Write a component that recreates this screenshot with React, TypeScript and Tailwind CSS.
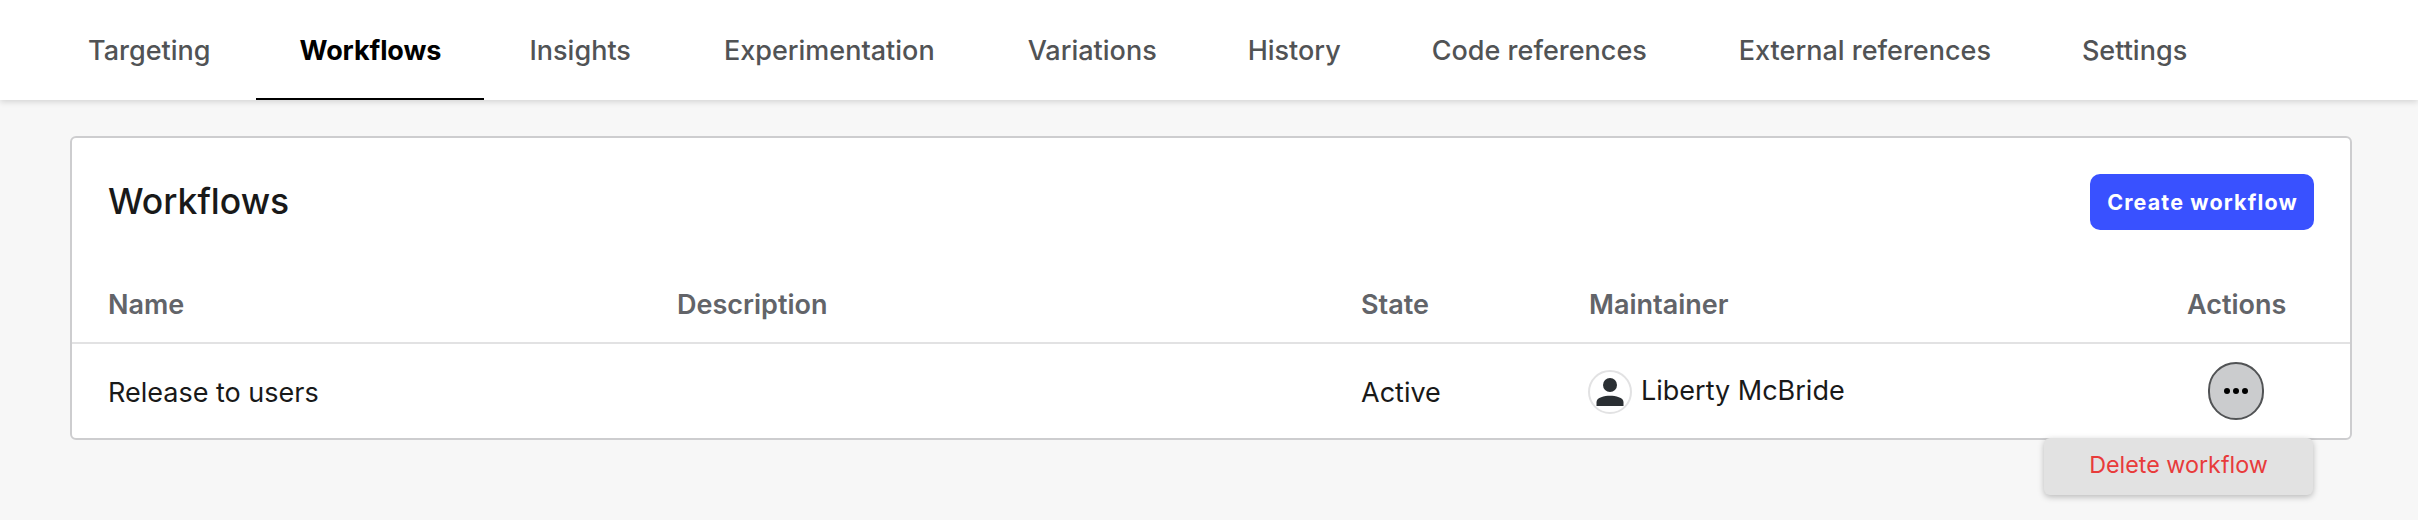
const tabs = [
  { label: 'Targeting', spacing: 'ml-0' },
  { label: 'Workflows', spacing: 'ml-0.5', active: true },
  { label: 'Insights', spacing: 'ml-px' },
  { label: 'Experimentation', spacing: 'ml-[5px]' },
  { label: 'Variations', spacing: 'ml-[5px]' },
  { label: 'History', spacing: 'ml-[3px]' },
  { label: 'Code references', spacing: 'ml-[3px]' },
  { label: 'External references', spacing: 'ml-1' },
  { label: 'Settings', spacing: 'ml-[3px]' },
];

const columns = 'grid grid-cols-[569px_684px_227px_599px_1fr] pl-9';

export default function App() {
  return (
    <div className="h-[520px] w-[2418px] overflow-hidden bg-[#f7f7f7] font-['Inter',sans-serif] text-[27px] text-[#191919]">
      <nav className="relative flex h-[100px] bg-white pl-11 text-[#515355] shadow-[0_2px_6px_rgba(0,0,0,0.14)]">
        {tabs.map(({ label, spacing, active }) => (
          <a
            key={label}
            className={`${spacing} flex items-center border-b-2 pt-[5px] ${
              active
                ? 'w-[228px] justify-center border-black font-bold tracking-[-0.1px] text-black'
                : 'border-transparent px-11 font-medium'
            }`}
          >
            {label}
          </a>
        ))}
      </nav>

      <main className="pt-9 pr-[66px] pl-[70px]">
        <section className="h-[304px] rounded-md border-2 border-[#cdcdcf] bg-white">
          <header className="flex h-[130px] items-center justify-between pr-9 pb-0.5 pl-9">
            <h1 className="text-[35.5px] font-medium">Workflows</h1>
            <button className="h-14 w-56 rounded-[10px] bg-[#3951ff] pl-px text-[21.5px] font-bold tracking-[1.15px] text-white">
              Create workflow
            </button>
          </header>

          <div className={`${columns} h-[76px] items-center border-b-2 border-[#e2e2e3] font-semibold text-[#626469]`}>
            <span>Name</span>
            <span>Description</span>
            <span>State</span>
            <span className="pl-px">Maintainer</span>
            <span>Actions</span>
          </div>

          <div className={`${columns} h-[94px] items-center`}>
            <span className="pt-[5px]">Release to users</span>
            <span />
            <span className="pt-[5px]">Active</span>
            <div className="flex items-center gap-[9px]">
              <span className="mt-0.5 flex size-11 items-center justify-center rounded-full border-2 border-[#e2e2e3]">
                <svg viewBox="0 0 28 28" className="size-7 fill-[#2a2f33]">
                  <circle cx="14" cy="7" r="7" />
                  <path d="M0.500 28v-4c0-4.500 8-6.200 13.500-6.200s13.500 1.700 13.500 6.200v4Z" />
                </svg>
              </span>
              <span>Liberty McBride</span>
            </div>
            <div className="relative pl-[21px]">
              <button className="flex h-[58px] w-14 items-center justify-center rounded-full border-2 border-[#515355] bg-[#cbccce]">
                <svg viewBox="0 0 24 6" className="h-1.5 w-6 fill-black">
                  <circle cx="3" cy="3" r="3" />
                  <circle cx="12" cy="3" r="3" />
                  <circle cx="21" cy="3" r="3" />
                </svg>
              </button>
              <div className="absolute top-[76px] left-[-143px] flex h-[57px] w-[269px] items-center justify-center rounded-md bg-[#e2e2e2] pb-0.5 text-[23.3px] text-[#e83b3b] shadow-[0_2px_6px_rgba(0,0,0,0.25)]">
                Delete workflow
              </div>
            </div>
          </div>
        </section>
      </main>
    </div>
  );
}
